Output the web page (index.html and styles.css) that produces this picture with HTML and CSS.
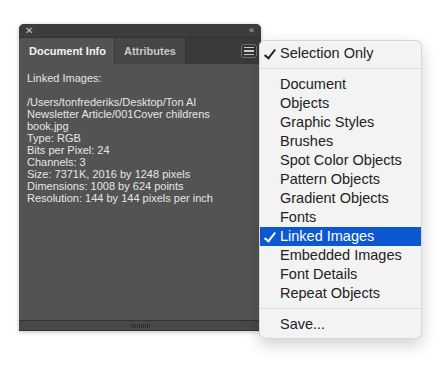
FILE: index.html
```html
<!DOCTYPE html>
<html lang="en">
<head>
  <meta charset="UTF-8">
  <title>Document Info</title>
  <link rel="stylesheet" href="styles.css">
</head>
<body>

  <div class="stage">
    <div class="panel">
      <div class="titlebar">
        <span class="close">&#x2715;</span>
        <span class="collapse">&lsaquo;&lsaquo;</span>
      </div>
      <div class="tabbar">
        <div class="tab active">Document Info</div>
        <div class="tab">Attributes</div>
        <div class="tab-fill">
          <button class="menu-btn" aria-label="Panel menu">
            <span></span><span></span><span></span>
          </button>
        </div>
      </div>
      <div class="info">
        <div>Linked Images:</div>
        <div>&nbsp;</div>
        <div>/Users/tonfrederiks/Desktop/Ton AI</div>
        <div>Newsletter Article/001Cover childrens</div>
        <div>book.jpg</div>
        <div>Type: RGB</div>
        <div>Bits per Pixel: 24</div>
        <div>Channels: 3</div>
        <div>Size: 7371K, 2016 by 1248 pixels</div>
        <div>Dimensions: 1008 by 624 points</div>
        <div>Resolution: 144 by 144 pixels per inch</div>
      </div>
      <div class="footer"><span class="grip"></span></div>
    </div>

    <ul class="menu">
      <li class="checked">Selection Only</li>
      <li class="sep"></li>
      <li>Document</li>
      <li>Objects</li>
      <li>Graphic Styles</li>
      <li>Brushes</li>
      <li>Spot Color Objects</li>
      <li>Pattern Objects</li>
      <li>Gradient Objects</li>
      <li>Fonts</li>
      <li class="checked selected">Linked Images</li>
      <li>Embedded Images</li>
      <li>Font Details</li>
      <li>Repeat Objects</li>
      <li class="sep"></li>
      <li>Save...</li>
    </ul>
  </div>

</body>
</html>
```

FILE: styles.css
```css
body {
  margin: 0;
  background-color: #fff;
  font-family: "Liberation Sans", Arial, sans-serif;
}
.stage {
  position: relative;
  width: 448px;
  height: 369px;
}
.panel {
  position: absolute;
  left: 19px;
  top: 24px;
  width: 242px;
  height: 307px;
  display: flex;
  flex-direction: column;
  background-color: #535353;
  border-radius: 5px 5px 0 0;
  box-shadow: 0 1px 4px rgba(0,0,0,0.25);
  overflow: hidden;
}
.titlebar {
  height: 13px;
  flex: none;
  display: flex;
  justify-content: space-between;
  align-items: center;
  padding: 0 8px 0 6px;
  background-color: #3d3d3d;
  color: #c8c8c8;
}
.close {
  font-size: 10px;
  line-height: 13px;
}
.collapse {
  font-size: 9px;
  letter-spacing: -1px;
  line-height: 13px;
}
.tabbar {
  height: 27px;
  flex: none;
  display: flex;
  background-color: #3a3a3a;
  border-top: 1px solid #333;
  box-sizing: border-box;
}
.tab {
  display: flex;
  align-items: center;
  padding: 0 9px 0 9px;
  font-size: 11px;
  font-weight: bold;
  color: #c9c9c9;
  background-color: #464646;
  border-right: 1px solid #363636;
}
.tab.active {
  padding: 0 8px 0 10px;
  background-color: #535353;
  color: #f2f2f2;
}
.tab-fill {
  flex: 1;
  display: flex;
  justify-content: flex-end;
  align-items: center;
  padding-right: 4px;
}
.menu-btn {
  width: 16px;
  height: 14px;
  padding: 0;
  border: 1px solid #707070;
  border-radius: 3px;
  background-color: #333;
  display: flex;
  flex-direction: column;
  justify-content: center;
  align-items: center;
  gap: 2px;
}
.menu-btn span {
  display: block;
  width: 10px;
  height: 1.5px;
  background-color: #cfcfcf;
}
.info {
  flex: 1;
  padding: 8px 8px 0 8px;
  font-size: 11px;
  line-height: 12px;
  color: #e6e6e6;
  white-space: nowrap;
}
.footer {
  height: 9px;
  flex: none;
  display: flex;
  justify-content: center;
  align-items: center;
  background-color: #484848;
  border-top: 1px solid #333;
  border-bottom: 1px solid #333;
}
.grip {
  width: 19px;
  height: 4px;
  background: repeating-linear-gradient(90deg, #2e2e2e 0 1px, transparent 1px 2px);
}
.menu {
  position: absolute;
  left: 259px;
  top: 40px;
  width: 163px;
  margin: 0;
  padding: 3px 0 4px 0;
  list-style: none;
  box-sizing: border-box;
  background-color: #f3f3f3;
  border: 1px solid #d6d6d6;
  border-radius: 6px;
  box-shadow: 0 6px 16px rgba(0,0,0,0.18);
  font-size: 14.5px;
  color: #222;
}
.menu li {
  height: 19px;
  line-height: 19px;
  padding-left: 20px;
  white-space: nowrap;
  position: relative;
}
.menu li.checked::before {
  content: "";
  position: absolute;
  left: 7px;
  top: 3px;
  width: 4px;
  height: 10px;
  border-right: 2px solid currentColor;
  border-bottom: 2px solid currentColor;
  transform: rotate(38deg);
}
.menu li.sep {
  height: 12px;
  padding: 0;
}
.menu li.sep::after {
  content: "";
  position: absolute;
  left: 0;
  right: 0;
  top: 5px;
  height: 1px;
  background-color: #dadada;
}
.menu li.selected {
  background-color: #0b58d0;
  color: #fff;
}
```
